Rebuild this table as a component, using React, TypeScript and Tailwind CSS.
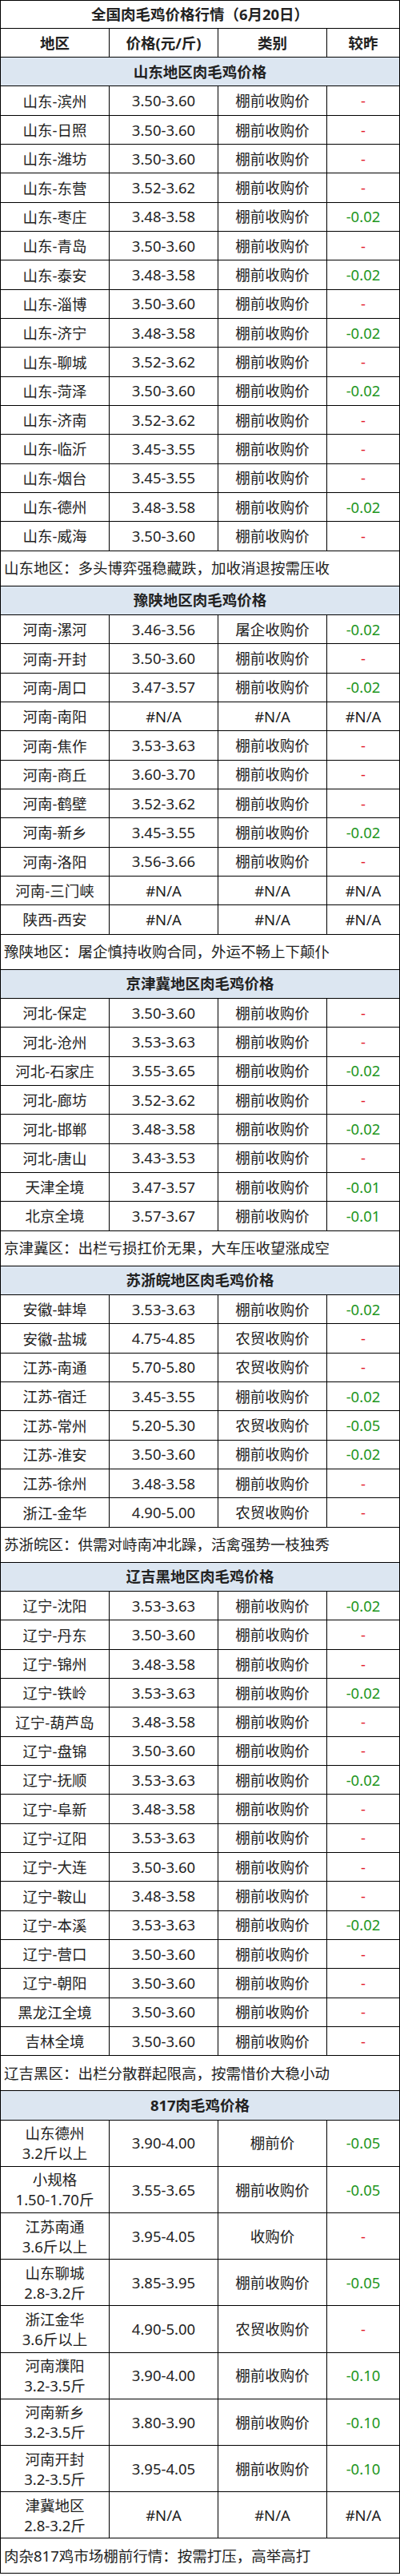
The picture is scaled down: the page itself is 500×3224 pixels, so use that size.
type Row = [string, string, string, string];

type Section = {
  title: string;
  rows: Row[];
  note: string;
  tall?: boolean;
};

const sections: Section[] = [
  {
    title: '山东地区肉毛鸡价格',
    rows: [
      ['山东-滨州', '3.50-3.60', '棚前收购价', '-'],
      ['山东-日照', '3.50-3.60', '棚前收购价', '-'],
      ['山东-潍坊', '3.50-3.60', '棚前收购价', '-'],
      ['山东-东营', '3.52-3.62', '棚前收购价', '-'],
      ['山东-枣庄', '3.48-3.58', '棚前收购价', '-0.02'],
      ['山东-青岛', '3.50-3.60', '棚前收购价', '-'],
      ['山东-泰安', '3.48-3.58', '棚前收购价', '-0.02'],
      ['山东-淄博', '3.50-3.60', '棚前收购价', '-'],
      ['山东-济宁', '3.48-3.58', '棚前收购价', '-0.02'],
      ['山东-聊城', '3.52-3.62', '棚前收购价', '-'],
      ['山东-菏泽', '3.50-3.60', '棚前收购价', '-0.02'],
      ['山东-济南', '3.52-3.62', '棚前收购价', '-'],
      ['山东-临沂', '3.45-3.55', '棚前收购价', '-'],
      ['山东-烟台', '3.45-3.55', '棚前收购价', '-'],
      ['山东-德州', '3.48-3.58', '棚前收购价', '-0.02'],
      ['山东-威海', '3.50-3.60', '棚前收购价', '-'],
    ],
    note: '山东地区：多头博弈强稳藏跌，加收消退按需压收',
  },
  {
    title: '豫陕地区肉毛鸡价格',
    rows: [
      ['河南-漯河', '3.46-3.56', '屠企收购价', '-0.02'],
      ['河南-开封', '3.50-3.60', '棚前收购价', '-'],
      ['河南-周口', '3.47-3.57', '棚前收购价', '-0.02'],
      ['河南-南阳', '#N/A', '#N/A', '#N/A'],
      ['河南-焦作', '3.53-3.63', '棚前收购价', '-'],
      ['河南-商丘', '3.60-3.70', '棚前收购价', '-'],
      ['河南-鹤壁', '3.52-3.62', '棚前收购价', '-'],
      ['河南-新乡', '3.45-3.55', '棚前收购价', '-0.02'],
      ['河南-洛阳', '3.56-3.66', '棚前收购价', '-'],
      ['河南-三门峡', '#N/A', '#N/A', '#N/A'],
      ['陕西-西安', '#N/A', '#N/A', '#N/A'],
    ],
    note: '豫陕地区：屠企慎持收购合同，外运不畅上下颠仆',
  },
  {
    title: '京津冀地区肉毛鸡价格',
    rows: [
      ['河北-保定', '3.50-3.60', '棚前收购价', '-'],
      ['河北-沧州', '3.53-3.63', '棚前收购价', '-'],
      ['河北-石家庄', '3.55-3.65', '棚前收购价', '-0.02'],
      ['河北-廊坊', '3.52-3.62', '棚前收购价', '-'],
      ['河北-邯郸', '3.48-3.58', '棚前收购价', '-0.02'],
      ['河北-唐山', '3.43-3.53', '棚前收购价', '-'],
      ['天津全境', '3.47-3.57', '棚前收购价', '-0.01'],
      ['北京全境', '3.57-3.67', '棚前收购价', '-0.01'],
    ],
    note: '京津冀区：出栏亏损扛价无果，大车压收望涨成空',
  },
  {
    title: '苏浙皖地区肉毛鸡价格',
    rows: [
      ['安徽-蚌埠', '3.53-3.63', '棚前收购价', '-0.02'],
      ['安徽-盐城', '4.75-4.85', '农贸收购价', '-'],
      ['江苏-南通', '5.70-5.80', '农贸收购价', '-'],
      ['江苏-宿迁', '3.45-3.55', '棚前收购价', '-0.02'],
      ['江苏-常州', '5.20-5.30', '农贸收购价', '-0.05'],
      ['江苏-淮安', '3.50-3.60', '棚前收购价', '-0.02'],
      ['江苏-徐州', '3.48-3.58', '棚前收购价', '-'],
      ['浙江-金华', '4.90-5.00', '农贸收购价', '-'],
    ],
    note: '苏浙皖区：供需对峙南冲北躁，活禽强势一枝独秀',
  },
  {
    title: '辽吉黑地区肉毛鸡价格',
    rows: [
      ['辽宁-沈阳', '3.53-3.63', '棚前收购价', '-0.02'],
      ['辽宁-丹东', '3.50-3.60', '棚前收购价', '-'],
      ['辽宁-锦州', '3.48-3.58', '棚前收购价', '-'],
      ['辽宁-铁岭', '3.53-3.63', '棚前收购价', '-0.02'],
      ['辽宁-葫芦岛', '3.48-3.58', '棚前收购价', '-'],
      ['辽宁-盘锦', '3.50-3.60', '棚前收购价', '-'],
      ['辽宁-抚顺', '3.53-3.63', '棚前收购价', '-0.02'],
      ['辽宁-阜新', '3.48-3.58', '棚前收购价', '-'],
      ['辽宁-辽阳', '3.53-3.63', '棚前收购价', '-'],
      ['辽宁-大连', '3.50-3.60', '棚前收购价', '-'],
      ['辽宁-鞍山', '3.48-3.58', '棚前收购价', '-'],
      ['辽宁-本溪', '3.53-3.63', '棚前收购价', '-0.02'],
      ['辽宁-营口', '3.50-3.60', '棚前收购价', '-'],
      ['辽宁-朝阳', '3.50-3.60', '棚前收购价', '-'],
      ['黑龙江全境', '3.50-3.60', '棚前收购价', '-'],
      ['吉林全境', '3.50-3.60', '棚前收购价', '-'],
    ],
    note: '辽吉黑区：出栏分散群起限高，按需惜价大稳小动',
  },
  {
    title: '817肉毛鸡价格',
    tall: true,
    rows: [
      ['山东德州\n3.2斤以上', '3.90-4.00', '棚前价', '-0.05'],
      ['小规格\n1.50-1.70斤', '3.55-3.65', '棚前收购价', '-0.05'],
      ['江苏南通\n3.6斤以上', '3.95-4.05', '收购价', '-'],
      ['山东聊城\n2.8-3.2斤', '3.85-3.95', '棚前收购价', '-0.05'],
      ['浙江金华\n3.6斤以上', '4.90-5.00', '农贸收购价', '-'],
      ['河南濮阳\n3.2-3.5斤', '3.90-4.00', '棚前收购价', '-0.10'],
      ['河南新乡\n3.2-3.5斤', '3.80-3.90', '棚前收购价', '-0.10'],
      ['河南开封\n3.2-3.5斤', '3.95-4.05', '棚前收购价', '-0.10'],
      ['津冀地区\n2.8-3.2斤', '#N/A', '#N/A', '#N/A'],
    ],
    note: '肉杂817鸡市场棚前行情：按需打压，高举高打',
  },
];

function changeColor(v: string) {
  if (v === '-') return 'text-[#e3172b]';
  if (v.startsWith('-')) return 'text-[#1d961d]';
  return 'text-[#222]';
}

function DataRow({ row, tall }: { row: Row; tall?: boolean }) {
  const [area, price, kind, change] = row;
  return (
    <div className={`flex border-b border-black ${tall ? 'h-[58.2px]' : 'h-[36.33px]'}`}>
      <div className="w-[136px] shrink-0 border-r border-black flex items-center justify-center text-center whitespace-pre-line leading-[25px]">
        {area}
      </div>
      <div className="w-[136px] shrink-0 border-r border-black flex items-center justify-center">{price}</div>
      <div className="w-[136px] shrink-0 border-r border-black flex items-center justify-center">{kind}</div>
      <div className={`flex-1 flex items-center justify-center ${changeColor(change)}`}>{change}</div>
    </div>
  );
}

export default function App() {
  return (
    <div
      className="w-[500px] bg-white text-[#222] text-[18.5px] border-l border-r border-t border-black"
      style={{ fontFamily: '"Noto Sans", "Noto Sans CJK SC", sans-serif' }}
    >
      <div className="h-[35px] border-b border-black flex items-center justify-center font-bold">
        全国肉毛鸡价格行情（6月20日）
      </div>
      <div className="flex h-[36px] border-b border-black font-bold">
        <div className="w-[136px] shrink-0 border-r border-black flex items-center justify-center">地区</div>
        <div className="w-[136px] shrink-0 border-r border-black flex items-center justify-center">价格(元/斤)</div>
        <div className="w-[136px] shrink-0 border-r border-black flex items-center justify-center">类别</div>
        <div className="flex-1 flex items-center justify-center">较昨</div>
      </div>
      {sections.map(s => (
        <div key={s.title}>
          <div className="h-[36.4px] border-b border-black bg-[#dce6f1] flex items-center justify-center font-bold">
            {s.title}
          </div>
          {s.rows.map(r => (
            <DataRow key={r[0]} row={r} tall={s.tall} />
          ))}
          <div className="h-[44px] border-b border-black flex items-center px-[4px]">{s.note}</div>
        </div>
      ))}
    </div>
  );
}
